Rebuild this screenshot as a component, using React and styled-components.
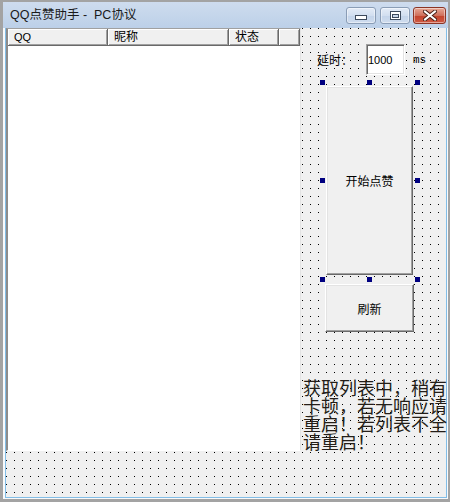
import React from 'react'
import styled, { createGlobalStyle } from 'styled-components'

const GlobalStyle = createGlobalStyle`
  html, body {
    margin: 0;
    padding: 0;
    background: #a3a3a3;
  }
  body {
    width: 450px;
    height: 502px;
    overflow: hidden;
    font-family: "Noto Sans", "Noto Sans CJK SC", sans-serif;
  }
`

const Desk = styled.div`
  width: 450px;
  height: 502px;
  box-sizing: border-box;
  padding: 2px 0 0 3px;
  background: #a3a3a3;
`

const Window = styled.div`
  width: 445px;
  height: 497px;
  display: flex;
  flex-direction: column;
  background: #f8fafc;
`

const TitleBar = styled.div`
  flex: none;
  height: 26px;
  display: flex;
  align-items: flex-start;
  padding: 0 2px 0 7px;
  background: linear-gradient(#cedcee, #bcd0e8);
`

const TitleText = styled.span`
  margin-top: 5px;
  font-family: "Liberation Sans", "Noto Sans CJK SC", sans-serif;
  font-size: 12.5px;
  line-height: 16px;
  color: #1a1a1a;
  white-space: pre;
`

const CaptionGroup = styled.div`
  margin-left: auto;
  margin-top: 5px;
  display: flex;
`

const CaptionButton = styled.div`
  width: ${p => p.$w}px;
  height: 17px;
  margin-left: ${p => p.$gap}px;
  box-sizing: border-box;
  border: 1px solid ${p => (p.$close ? '#8b3526' : '#8a9db6')};
  border-radius: 3px;
  background: ${p =>
    p.$close
      ? 'linear-gradient(#e7a896, #d0705c 50%, #c3432c 51%, #cf5a44)'
      : 'linear-gradient(#e4ecf7, #d2dff0 50%, #c3d4ea 51%, #cfdcee)'};
  box-shadow: inset 0 0 0 1px rgba(255, 255, 255, 0.45);
  display: flex;
  align-items: center;
  justify-content: center;
`

const Client = styled.div`
  flex: 1;
  margin: 0 1px 1px 2px;
  border: 1px solid #82bde6;
  border-top: none;
  display: flex;
  background-color: #f0f0f0;
  background-image: conic-gradient(from 270deg at 1px 1px, #000 0deg 90deg, transparent 90deg 360deg);
  background-size: 8px 8px;
`

const ListView = styled.div`
  flex: none;
  width: 295px;
  height: 423px;
  box-sizing: border-box;
  background: #fff;
  border-left: 2px solid #8c8c8c;
  border-top: 1px solid #a0a0a0;
  border-right: 1px solid #e3e3e3;
  border-bottom: 1px solid #fff;
  display: flex;
  flex-direction: column;
`

const HeaderRow = styled.div`
  display: flex;
  height: 17px;
`

const HeaderCell = styled.div`
  ${p => (p.$w ? `width: ${p.$w}px; flex: none;` : 'flex: 1;')}
  box-sizing: border-box;
  height: 17px;
  padding-left: 6px;
  background: #f0f0f0;
  border-right: 1px solid #696969;
  border-bottom: 1px solid #696969;
  box-shadow: inset 1px 1px #fff, inset -1px -1px #a0a0a0;
  font-family: "Liberation Sans", "Noto Sans CJK SC", sans-serif;
  font-size: ${p => (p.$small ? 11 : 12)}px;
  line-height: 16px;
  color: #000;
`

const RightPanel = styled.div`
  flex: 1;
  display: flex;
  flex-direction: column;
  padding-top: 16px;
`

const DelayRow = styled.div`
  display: flex;
  align-items: center;
  height: 31px;
  padding-left: 16px;
`

const DelayLabel = styled.span`
  width: 49px;
  font-family: "Noto Sans CJK SC", sans-serif;
  font-size: 12px;
  color: #000;
`

const TextBox = styled.div`
  width: 39px;
  height: 31px;
  box-sizing: border-box;
  padding-left: 1px;
  background: #fff;
  border-top: 1px solid #a0a0a0;
  border-left: 1px solid #a0a0a0;
  border-right: 1px solid #fff;
  border-bottom: 1px solid #fff;
  box-shadow: inset 1px 1px #696969, inset -1px -1px #e3e3e3;
  display: flex;
  align-items: center;
  font-family: "Liberation Sans", sans-serif;
  font-size: 11px;
  color: #000;
`

const Unit = styled.span`
  margin-left: 8px;
  font-family: "Liberation Mono", monospace;
  font-size: 11px;
  color: #000;
`

const Selection = styled.div`
  position: relative;
  margin: 10px 0 0 24px;
  width: 90px;
  height: 192px;
  box-sizing: border-box;
  padding: 1px 2px 2px 1px;
`

const Handle = styled.div`
  position: absolute;
  left: ${p => p.$x}px;
  top: ${p => p.$y}px;
  width: 5px;
  height: 5px;
  background: #000080;
`

const PushButton = styled.div`
  box-sizing: border-box;
  width: ${p => (p.$w ? `${p.$w}px` : '100%')};
  height: ${p => (p.$h ? `${p.$h}px` : '100%')};
  margin: ${p => p.$margin || '0'};
  background: #f0f0f0;
  border-top: 1px solid #fff;
  border-left: 1px solid #fff;
  border-right: 1px solid #696969;
  border-bottom: 1px solid #696969;
  box-shadow: inset -1px -1px #a0a0a0, inset 1px 1px #e3e3e3;
  display: flex;
  align-items: center;
  justify-content: center;
  font-family: "Noto Sans CJK SC", sans-serif;
  font-size: 12px;
  color: #000;
`

const Notice = styled.div`
  margin: 46px 0 0 2px;
  width: 146px;
  font-family: "Noto Sans CJK SC", serif;
  font-size: 18px;
  line-height: 18px;
  color: #241e18;
`

const handles = [
  [-5, -5], [42, -5], [90, -5],
  [-5, 93], [90, 93],
  [-5, 192], [42, 192], [90, 192],
]

function MinGlyph() {
  return (
    <svg width="12" height="6" viewBox="0 0 12 6" style={{ marginTop: 5 }}>
      <rect x="0.5" y="0.5" width="11" height="4" fill="#fff" stroke="#3d4a5c" />
    </svg>
  )
}

function MaxGlyph() {
  return (
    <svg width="11" height="9" viewBox="0 0 11 9">
      <rect x="0.5" y="0.5" width="10" height="8" fill="#fff" stroke="#3d4a5c" />
      <rect x="2.5" y="3.5" width="6" height="3" fill="#c9d7ea" stroke="#3d4a5c" />
    </svg>
  )
}

function CloseGlyph() {
  return (
    <svg width="14" height="11" viewBox="0 0 14 11">
      <path d="M2 1.5 L12 9.5 M12 1.5 L2 9.5" stroke="#4a1f16" strokeWidth="4" strokeLinecap="square" />
      <path d="M2 1.5 L12 9.5 M12 1.5 L2 9.5" stroke="#fff" strokeWidth="2" strokeLinecap="square" />
    </svg>
  )
}

export default function App() {
  return (
    <Desk>
      <GlobalStyle />
      <Window>
        <TitleBar>
          <TitleText>{'QQ点赞助手 -  PC协议'}</TitleText>
          <CaptionGroup>
            <CaptionButton $w={30} $gap={0}><MinGlyph /></CaptionButton>
            <CaptionButton $w={30} $gap={4}><MaxGlyph /></CaptionButton>
            <CaptionButton $w={33} $gap={3} $close><CloseGlyph /></CaptionButton>
          </CaptionGroup>
        </TitleBar>
        <Client>
          <ListView>
            <HeaderRow>
              <HeaderCell $w={100} $small>QQ</HeaderCell>
              <HeaderCell $w={121}>昵称</HeaderCell>
              <HeaderCell $w={50}>状态</HeaderCell>
              <HeaderCell />
            </HeaderRow>
          </ListView>
          <RightPanel>
            <DelayRow>
              <DelayLabel>延时：</DelayLabel>
              <TextBox>1000</TextBox>
              <Unit>ms</Unit>
            </DelayRow>
            <Selection>
              <PushButton>开始点赞</PushButton>
              {handles.map(([x, y]) => (
                <Handle key={`${x}-${y}`} $x={x} $y={y} />
              ))}
            </Selection>
            <PushButton $w={89} $h={48} $margin="7px 0 0 24px">刷新</PushButton>
            <Notice>获取列表中，稍有卡顿，若无响应请重启！若列表不全请重启！</Notice>
          </RightPanel>
        </Client>
      </Window>
    </Desk>
  )
}
